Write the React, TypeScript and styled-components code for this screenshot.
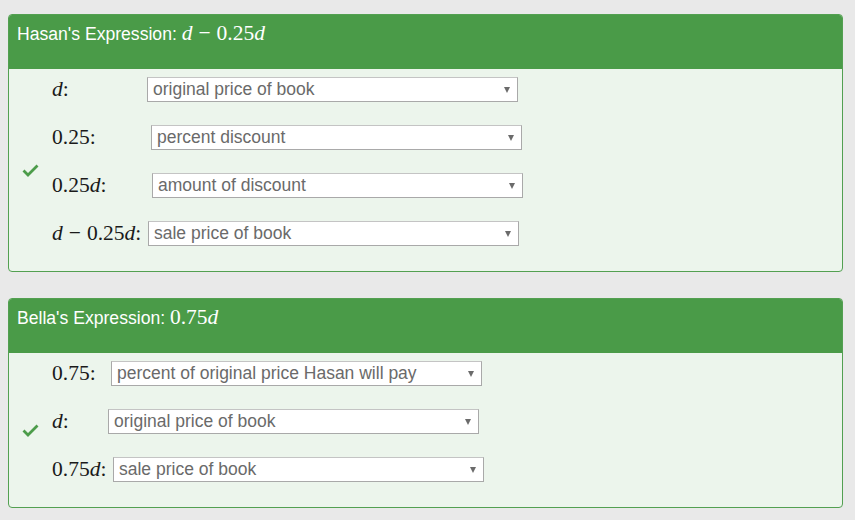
import React from "react";
import styled, { createGlobalStyle } from "styled-components";

const GlobalStyle = createGlobalStyle`
  html, body {
    margin: 0;
    padding: 0;
    background: #e9e9e9;
  }
  body {
    padding: 14px 0 0 8px;
    font-family: "Liberation Sans", Arial, sans-serif;
  }
`;

const Stack = styled.div`
  display: flex;
  flex-direction: column;
  gap: 26px;
  width: 835px;
`;

const Panel = styled.div`
  border: 1px solid #53a051;
  border-radius: 4px;
  overflow: hidden;
  background: #ecf5ec;
`;

const Header = styled.div`
  height: 54px;
  box-sizing: border-box;
  padding: 7px 8px 0 8px;
  background: #4a9b48;
  color: #fff;
  font-size: 17.6px;
  line-height: 22px;
`;

const HeaderMath = styled.span`
  font-family: "Liberation Serif", "Times New Roman", serif;
  font-size: 21.5px;
`;

const V = styled.i`
  font-style: italic;
`;

const Op = styled.span`
  margin: 0 6px;
`;

const Body = styled.div`
  display: flex;
  align-items: stretch;
`;

const CheckCol = styled.div`
  width: 43px;
  box-sizing: border-box;
  padding-left: 13px;
  display: flex;
  align-items: center;
`;

const Rows = styled.div`
  display: flex;
  flex-direction: column;
  gap: 23px;
  padding: 8px 0 25px;
`;

const Row = styled.div`
  display: flex;
  align-items: center;
  height: 25px;
`;

const Label = styled.div<{ $width: number }>`
  width: ${(p) => p.$width}px;
  font-family: "Liberation Serif", "Times New Roman", serif;
  font-size: 21.5px;
  color: #1a1a1a;
  white-space: nowrap;
`;

const FakeSelect = styled.div`
  position: relative;
  width: 371px;
  height: 25px;
  box-sizing: border-box;
  border: 1px solid #a9a9a9;
  border-top-color: #c4c4c4;
  background: #fff;
  padding: 0 24px 0 5px;
  font-size: 17.5px;
  line-height: 23px;
  color: #6a6a6a;
  white-space: nowrap;
`;

const Arrow = styled.span`
  position: absolute;
  right: 7px;
  top: 9px;
  width: 0;
  height: 0;
  border-left: 3.5px solid transparent;
  border-right: 3.5px solid transparent;
  border-top: 6px solid #6b6b6b;
`;

interface Choice {
  label: React.ReactNode;
  labelWidth: number;
  value: string;
}

interface PanelData {
  name: string;
  expression: React.ReactNode;
  rows: Choice[];
}

const Dash = () => <Op>−</Op>;

const panels: PanelData[] = [
  {
    name: "Hasan's Expression:",
    expression: (
      <>
        <V>d</V>
        <Dash />
        0.25<V>d</V>
      </>
    ),
    rows: [
      { label: <><V>d</V>:</>, labelWidth: 95, value: "original price of book" },
      { label: <>0.25:</>, labelWidth: 99, value: "percent discount" },
      { label: <>0.25<V>d</V>:</>, labelWidth: 100, value: "amount of discount" },
      {
        label: (
          <>
            <V>d</V>
            <Dash />
            0.25<V>d</V>:
          </>
        ),
        labelWidth: 96,
        value: "sale price of book",
      },
    ],
  },
  {
    name: "Bella's Expression:",
    expression: (
      <>
        0.75<V>d</V>
      </>
    ),
    rows: [
      { label: <>0.75:</>, labelWidth: 59, value: "percent of original price Hasan will pay" },
      { label: <><V>d</V>:</>, labelWidth: 56, value: "original price of book" },
      { label: <>0.75<V>d</V>:</>, labelWidth: 61, value: "sale price of book" },
    ],
  },
];

export default function App() {
  return (
    <>
      <GlobalStyle />
      <Stack>
        {panels.map((p) => (
          <Panel key={p.name}>
            <Header>
              {p.name} <HeaderMath>{p.expression}</HeaderMath>
            </Header>
            <Body>
              <CheckCol>
                <svg width="17" height="13" viewBox="0 0 17 13">
                  <polyline
                    points="1.5,6.5 6,11 15.5,1.5"
                    fill="none"
                    stroke="#4c9c4a"
                    strokeWidth="2.8"
                  />
                </svg>
              </CheckCol>
              <Rows>
                {p.rows.map((r, i) => (
                  <Row key={i}>
                    <Label $width={r.labelWidth}>{r.label}</Label>
                    <FakeSelect>
                      {r.value}
                      <Arrow />
                    </FakeSelect>
                  </Row>
                ))}
              </Rows>
            </Body>
          </Panel>
        ))}
      </Stack>
    </>
  );
}
